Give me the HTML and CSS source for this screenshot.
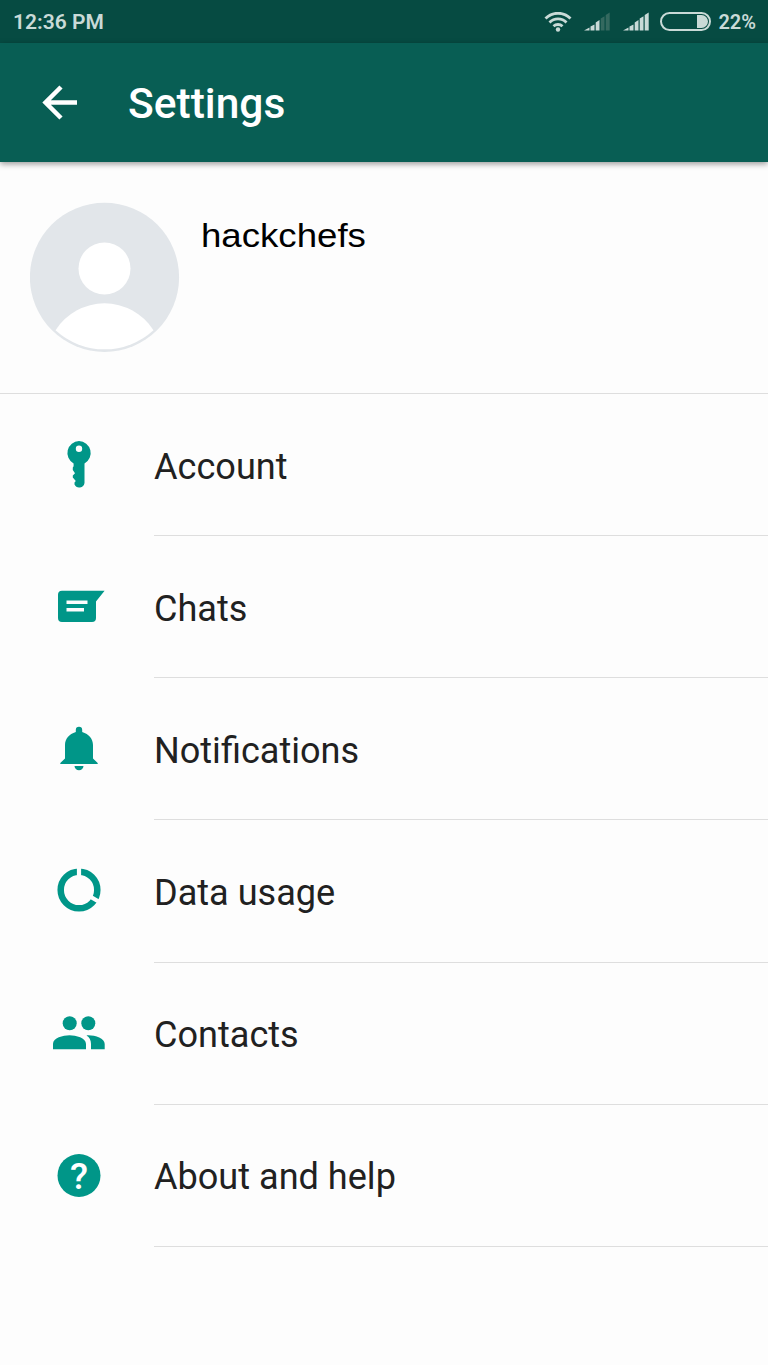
FILE: index.html
```html
<!DOCTYPE html>
<html>
<head>
  <meta charset="utf-8">
  <title>Settings</title>
  <link rel="stylesheet" href="styles.css">
</head>
<body>
  <div class="status-bar">
    <span class="time">12:36 PM</span>
    <div class="status-icons">
      <svg class="wifi" width="28" height="20" viewBox="0 0 28 20">
        <path d="M1.5 6.500a17.500 17.500 0 0 1 25 0M5.500 10.500a12 12 0 0 1 17 0M9.500 14.300a6.500 6.500 0 0 1 9 0"/>
        <circle cx="14" cy="17.500" r="2.200"/>
      </svg>
      <svg class="signal" width="27" height="19" viewBox="0 0 27 19">
        <path d="M0 18.500L5.500 15.500V18.500zM6.500 14.500L10.500 12.500V18.500H6.500zM11.700 10.500L15.500 8V18.500H11.700z"/>
        <path class="dim" d="M16.700 6.500L20.500 4.200V18.500H16.700zM21.700 3L25.700 .5V18.500H21.700z"/>
      </svg>
      <svg class="signal" width="27" height="19" viewBox="0 0 27 19">
        <path d="M0 18.500L5.500 15.500V18.500zM6.500 14.500L10.500 12.500V18.500H6.500zM11.700 10.500L15.500 8V18.500H11.700zM16.700 6.500L20.500 4.200V18.500H16.700zM21.700 3L25.700 .5V18.500H21.700z"/>
      </svg>
      <div class="battery"><div class="battery-level"></div></div>
      <span class="percent">22%</span>
    </div>
  </div>

  <header class="app-bar">
    <svg class="back" width="36" height="36" viewBox="0 0 36 36">
      <path d="M35 17.500H4M19 2L3.500 17.500L19 33"/>
    </svg>
    <h1>Settings</h1>
  </header>

  <div class="profile">
    <svg class="avatar" width="150" height="150" viewBox="0 0 150 150">
      <circle cx="74.500" cy="75.300" r="74.600" fill="#e2e6ea"/>
      <circle cx="74.500" cy="66.500" r="26" fill="#fff"/>
      <path d="M25.500 128.300A58 58 0 0 1 123.500 128.300A72.500 72.500 0 0 1 25.500 128.300z" fill="#fff"/>
    </svg>
    <span class="name">hackchefs</span>
  </div>

  <ul class="menu">
    <li>
      <svg class="icon" viewBox="0 0 60 60">
        <path fill-rule="evenodd" d="M30 6a12 12 0 0 1 5.500 22.500V48a5.300 5.300 0 0 1-10 1.500V47.500l1.300-1.500-3-3.500v-2l2.200-2.200-2.200-3.300V32.500l.8-1.200V28.500A12 12 0 0 1 30 6zM30 10.600a3.200 3.200 0 1 0 0 6.400a3.200 3.200 0 1 0 0-6.400z"/>
      </svg>
      <span class="label">Account</span>
    </li>
    <li>
      <svg class="icon" viewBox="0 0 60 60">
        <path fill-rule="evenodd" d="M13 13.700H55.600L47 24.500V41a4 4 0 0 1-4 4H13a4 4 0 0 1-4-4V17.700a4 4 0 0 1 4-4zM17.500 23.500V27H38.500V23.500zM17.500 31V34.500H35V31z"/>
      </svg>
      <span class="label">Chats</span>
    </li>
    <li>
      <svg class="icon" viewBox="0 0 60 60">
        <path d="M26.800 13V11a3.200 3.200 0 0 1 6.400 0V13C40 15 44 20 44 26V39.500L48.700 44V45H11.300V44L16 39.500V26C16 20 20 15 26.800 13zM25.500 47H34.500a4.500 4.200 0 0 1-9 0z"/>
      </svg>
      <span class="label">Notifications</span>
    </li>
    <li>
      <svg class="icon" viewBox="0 0 60 60">
        <circle class="ring" cx="30" cy="29" r="18.300"/>
        <path class="gap" d="M30 20V5M38 33.700L53 42.500"/>
      </svg>
      <span class="label">Data usage</span>
    </li>
    <li>
      <svg class="icon" viewBox="0 0 60 60">
        <circle cx="20.700" cy="19.300" r="7"/>
        <circle cx="39.300" cy="19.300" r="7"/>
        <path d="M4 45.300V40C4 34 14 31.300 20.500 31.300S37 34 37 40V45.300zM37.500 31.400C45 30.800 55.700 34 55.700 40V45.300H42V40C42 36.300 40.500 33.300 37.500 31.400z"/>
      </svg>
      <span class="label">Contacts</span>
    </li>
    <li>
      <svg class="icon" viewBox="0 0 60 60">
        <circle cx="30" cy="29.500" r="21.500"/>
        <text class="question" x="30" y="43">?</text>
      </svg>
      <span class="label">About and help</span>
    </li>
  </ul>
</body>
</html>
```

FILE: styles.css
```css
* {
  box-sizing: border-box;
}

body {
  margin: 0;
  min-height: 100vh;
  background-color: #fdfdfd;
  font-family: Roboto, sans-serif;
  color: #212121;
}

.status-bar {
  display: flex;
  justify-content: space-between;
  align-items: center;
  height: 43px;
  padding: 0 13px;
  background-color: #064b42;
  color: #c9dad7;
  font-size: 21px;
  font-weight: 600;
}

.status-icons {
  display: flex;
  align-items: center;
}

.wifi {
  margin-right: 12px;
  fill: #c9dad7;
}

.wifi path {
  fill: none;
  stroke: #c9dad7;
  stroke-width: 2.8;
}

.signal {
  margin-right: 12px;
  fill: #c9dad7;
}

.signal + .battery {
  margin-left: -2px;
}

.signal .dim {
  fill: #34695f;
}

.battery {
  display: flex;
  justify-content: flex-end;
  width: 51px;
  height: 19px;
  margin-right: 7px;
  padding: 1px;
  border: 2px solid #c9dad7;
  border-radius: 10px;
}

.battery-level {
  width: 11px;
  background-color: #c9dad7;
  border-radius: 0 7px 7px 0;
}

.percent {
  margin-right: -1px;
  font-size: 20px;
}

.app-bar {
  display: flex;
  align-items: center;
  height: 119px;
  padding-left: 42px;
  background-color: #085e54;
  color: #fff;
  box-shadow: 0 2px 6px rgba(0, 0, 0, 0.4);
}

.back {
  margin-right: 50px;
  fill: none;
  stroke: #fff;
  stroke-width: 4.5;
}

h1 {
  margin: 2px 0 0;
  font-size: 42.5px;
  font-weight: 500;
}

.profile {
  display: flex;
  height: 232px;
  padding: 40px 30px;
  border-bottom: 1px solid #dedede;
}

.avatar {
  margin-right: 21px;
}

.name {
  margin-top: 15px;
  font-family: "Liberation Sans", Arial, sans-serif;
  font-size: 33px;
  line-height: 38px;
  color: #000;
  transform: scaleX(1.11);
  transform-origin: left;
}

.menu {
  margin: 0;
  padding: 0;
  list-style: none;
}

.menu li {
  display: flex;
  align-items: center;
  height: 142.15px;
  padding-left: 49px;
}

.icon {
  width: 60px;
  height: 60px;
  margin-right: 45px;
  fill: #009688;
}

.ring {
  fill: none;
  stroke: #009688;
  stroke-width: 6.5;
}

.gap {
  stroke: #fdfdfd;
  stroke-width: 4.2;
}

.question {
  fill: #fff;
  font-size: 37px;
  font-weight: 500;
  text-anchor: middle;
}

.label {
  display: flex;
  align-items: center;
  flex: 1;
  height: 100%;
  padding-top: 4px;
  border-bottom: 1px solid #dedede;
  font-size: 36.1px;
}
```
